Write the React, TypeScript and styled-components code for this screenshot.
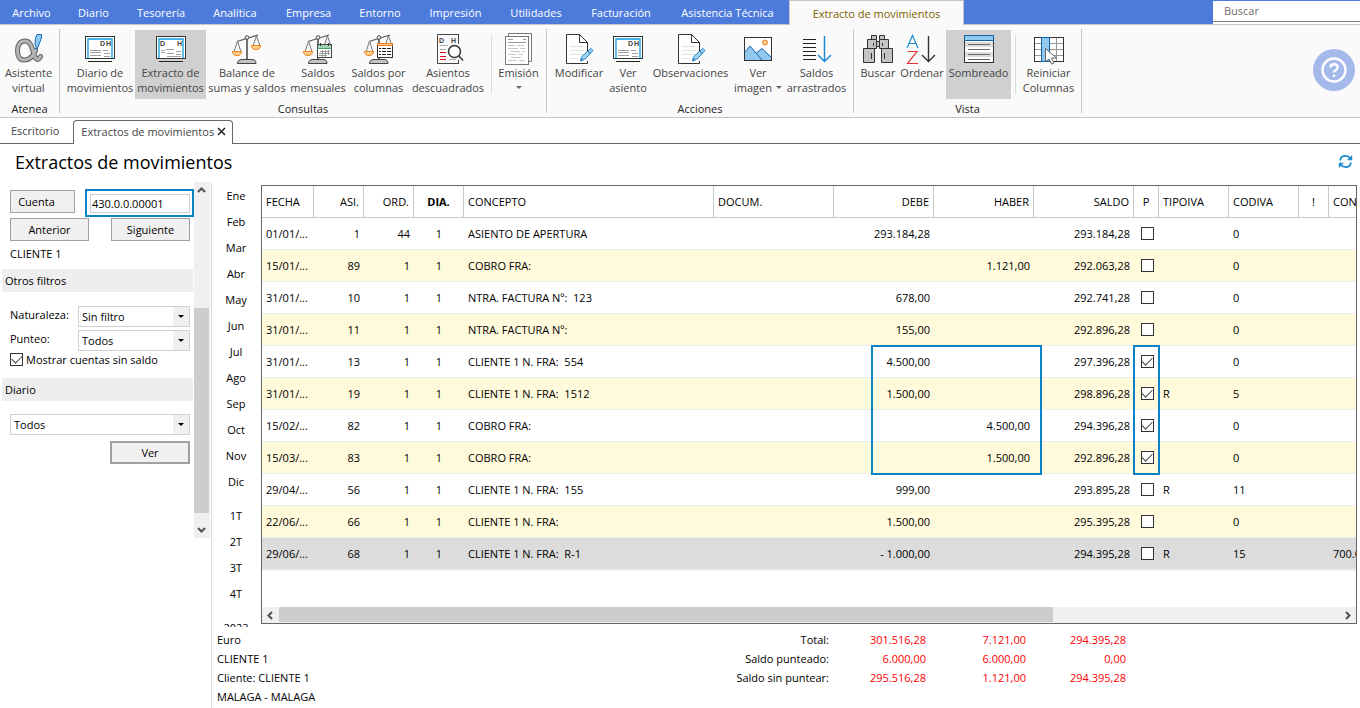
import React from "react";
import styled, { createGlobalStyle, css } from "styled-components";

const GlobalStyle = createGlobalStyle`
  * { box-sizing: border-box; }
  body {
    margin: 0;
    background: #fff;
    color: #000;
    font-family: "Open Sans", "Noto Sans", sans-serif;
    font-size: 11px;
    line-height: 15px;
  }
  button, input, select { font: inherit; color: inherit; margin: 0; }
  h1 { margin: 0; }
`;

const BLUE = "#0a84c9";

const Page = styled.div`
  min-height: 100vh;
  display: flex;
  flex-direction: column;
`;

/* ---------- Menu bar ---------- */

const MenuBar = styled.nav`
  display: flex;
  height: 24px;
  background: #4d7bdc;
`;

const MenuItem = styled.button<{ $w: number; $active?: boolean }>`
  flex: none;
  width: ${(p) => p.$w}px;
  height: 24px;
  padding: 1px 0 0;
  border: 0;
  background: transparent;
  color: #fff;
  white-space: nowrap;
  ${(p) =>
    p.$active &&
    css`
      height: 25px;
      border: 1px solid #c6c6c6;
      border-bottom: 0;
      padding-top: 0;
      background: #fafafa;
      color: #7f6000;
      position: relative;
    `}
`;

const SearchBox = styled.input`
  width: 147px;
  height: 23px;
  margin: 1px 0 0 auto;
  padding: 0 11px 5px;
  border: 0;
  background: linear-gradient(#808080, #808080) 0 20px / 100% 1px no-repeat #fff;
  outline: 0;
  &::placeholder { color: #6e6e6e; opacity: 1; }
`;

/* ---------- Ribbon ---------- */

const Ribbon = styled.div`
  display: flex;
  height: 94px;
  background: #fafafa;
  border-top: 1px solid #c6c6c6;
  border-bottom: 1px solid #c6c6c6;
`;

const RibbonGroup = styled.section`
  display: flex;
  flex-direction: column;
  margin: 4px 0;
  border-right: 1px solid #c6c6c6;
`;

const GroupTools = styled.div<{ $start: number; $end: number }>`
  display: flex;
  padding: 1px ${(p) => p.$end}px 0 ${(p) => p.$start}px;
`;

const GroupTitle = styled.div`
  margin-top: 2px;
  text-align: center;
  color: #222;
`;

const ToolButton = styled.button<{ $w: number; $active?: boolean }>`
  flex: none;
  width: ${(p) => p.$w}px;
  height: 69px;
  padding: 3px 0 0;
  border: 0;
  display: flex;
  flex-direction: column;
  align-items: center;
  color: #444;
  white-space: nowrap;
  background: ${(p) => (p.$active ? "#d0d0d0" : "transparent")};
`;

const ToolLine = styled.span`
  display: flex;
  align-items: center;
  justify-content: center;
  gap: 4px;
  height: 15px;
`;

const ToolSeparator = styled.div`
  width: 1px;
  height: 59px;
  margin: 5px 0 0 4px;
  background: #dcdcdc;
`;

const Caret = styled.span<{ $color?: string }>`
  border: 3px solid transparent;
  border-top-color: ${(p) => p.$color ?? "#666"};
  border-bottom: 0;
`;

const HelpButton = styled.button`
  width: 42px;
  height: 42px;
  margin: 24px 5px 0 auto;
  padding: 0;
  border: 0;
  border-radius: 50%;
  background: #a5baeb;
`;

/* ---------- Document tabs and title ---------- */

const TabStrip = styled.div`
  display: flex;
  align-items: flex-end;
  height: 26px;
  border-bottom: 1px solid #666;
`;

const DocTab = styled.div<{ $active?: boolean }>`
  display: flex;
  align-items: center;
  gap: 3px;
  height: 24px;
  margin-bottom: -1px;
  padding: 0 14px 3px 11px;
  color: #444;
  ${(p) =>
    p.$active &&
    css`
      padding: 0 6px 3px 7px;
      border: 1px solid #666;
      border-bottom: 0;
      border-radius: 4px 4px 0 0;
      background: #fff;
    `}
`;

const IconButton = styled.button`
  display: flex;
  padding: 0;
  border: 0;
  background: transparent;
`;

const TitleRow = styled.header`
  display: flex;
  align-items: center;
  justify-content: space-between;
  height: 38px;
  padding: 0 7px 3px 15px;
`;

const Title = styled.h1`
  font-size: 18px;
  line-height: 24px;
  font-weight: 400;
`;

/* ---------- Sidebar ---------- */

const Body = styled.main`
  flex: 1;
  display: flex;
`;

const Sidebar = styled.aside`
  flex: none;
  width: 212px;
  display: flex;
  align-items: flex-start;
  border-right: 1px solid #dcdcdc;
`;

const Filters = styled.form`
  width: 194px;
  padding-top: 7px;
  display: flex;
  flex-direction: column;
`;

const FilterRow = styled.div<{ $end?: boolean }>`
  display: flex;
  align-items: center;
  justify-content: ${(p) => (p.$end ? "flex-end" : "space-between")};
  padding: 0 4px 0 10px;
`;

const AccountRow = styled(FilterRow)`
  align-items: flex-start;
  padding-right: 0;
`;

const PushButton = styled.button<{ $w: number; $default?: boolean }>`
  width: ${(p) => p.$w}px;
  height: 23px;
  padding: 0;
  border: ${(p) => (p.$default ? 2 : 1)}px solid #a0a0a0;
  background: #f0f0f0;
`;

const CueButton = styled(PushButton)`
  margin-top: 1px;
  padding-right: 12px;
`;

const HighlightFrame = styled.div`
  display: flex;
  padding: 3px 2px 2px 3px;
  border: 2px solid ${BLUE};
`;

const AccountInput = styled.input`
  width: 100px;
  height: 19px;
  padding: 0 1px 1px;
  border: 1px solid #d0d0d0;
  outline: 0;
`;

const StepRow = styled(FilterRow)`
  margin-top: 1px;
`;

const AccountName = styled.div`
  margin: 5px 0 8px 10px;
`;

const SectionBar = styled.div`
  height: 23px;
  margin: 0 1px 0 2px;
  padding: 4px 3px;
  background: #eee;
`;

const FieldRows = styled.div`
  display: flex;
  flex-direction: column;
  gap: 3px;
  margin-top: 14px;
`;

const FieldLabel = styled.label`
  padding-bottom: 5px;
`;

const SelectShell = styled.div<{ $w: number }>`
  width: ${(p) => p.$w}px;
  height: 21px;
  display: grid;
  grid-template-columns: 1fr 16px;
  border: 1px solid #d0d0d0;
  background: linear-gradient(#f0f0f0, #f0f0f0) right / 16px 100% no-repeat #fff;
  select {
    grid-area: 1 / 1 / 2 / 3;
    appearance: none;
    border: 0;
    padding: 0 3px;
    background: transparent;
    outline: 0;
  }
  span {
    grid-area: 1 / 2;
    place-self: center;
    pointer-events: none;
  }
`;

const CheckLabel = styled.label`
  display: flex;
  align-items: center;
  gap: 3px;
  height: 15px;
  margin: 1px 0 11px 10px;
`;

const CheckBox = styled.input`
  appearance: none;
  flex: none;
  width: 13px;
  height: 13px;
  border: 1px solid #333;
  background: #fff;
  display: grid;
  place-content: center;
  td > & { margin: 0 auto; }
  &:checked::after {
    content: "";
    width: 9px;
    height: 5px;
    margin-bottom: 3px;
    border: solid #444;
    border-width: 0 0 1px 1px;
    transform: rotate(-45deg);
  }
`;

const JournalRow = styled(FilterRow)`
  margin: 13px 0 6px;
`;

const VScroll = styled.div`
  width: 16px;
  height: 356px;
  display: flex;
  flex-direction: column;
  align-items: stretch;
  background: #f0f0f0;
`;

const VEnd = styled.div`
  height: 17px;
  padding-right: 1px;
  display: flex;
  align-items: center;
  justify-content: center;
`;

const VThumb = styled.div`
  height: 205px;
  margin: auto 1px 8px 0;
  background: #cdcdcd;
`;

/* ---------- Ledger ---------- */

const Content = styled.div`
  flex: 1;
  min-width: 0;
  display: flex;
  flex-direction: column;
`;

const LedgerRow = styled.div`
  flex: 1;
  display: flex;
`;

const Periods = styled.div`
  flex: none;
  width: 49px;
  contain: size;
  overflow: hidden;
`;

const PeriodGroup = styled.div`
  margin-bottom: 8px;
`;

const Period = styled.button`
  display: block;
  width: 100%;
  height: 26px;
  padding: 0 1px 0 0;
  border: 0;
  background: transparent;
`;

const Frame = styled.div`
  position: relative;
  flex: 1;
  min-width: 0;
  margin: 3px 3px 3px 0;
  display: flex;
  flex-direction: column;
  overflow: hidden;
  border: 1px solid #666;
`;

const Table = styled.table`
  width: 1177px;
  table-layout: fixed;
  border-collapse: separate;
  border-spacing: 0;
`;

type Align = "left" | "center" | "right";

const Th = styled.th<{ $align: Align; $strong?: boolean }>`
  height: 32px;
  padding: 0 4px 1px;
  border-right: 1px solid #c8c8c8;
  border-bottom: 1px solid #c8c8c8;
  font-weight: ${(p) => (p.$strong ? 700 : 400)};
  text-align: ${(p) => p.$align};
  white-space: nowrap;
`;

const Td = styled.td<{ $align: Align; $tick?: boolean }>`
  height: 32px;
  padding: ${(p) => (p.$tick ? "0 3px 0 4px" : "0 4px 1px")};
  border-bottom: 1px solid #eee;
  text-align: ${(p) => p.$align};
  white-space: pre;
`;

const Tr = styled.tr<{ $tone: "plain" | "shade" | "current" }>`
  background: ${(p) =>
    p.$tone === "current" ? "#dcdcdc" : p.$tone === "shade" ? "#fffadc" : "#fff"};
  ${(p) =>
    p.$tone === "current" &&
    css`
      td {
        height: 33px;
        border-bottom-width: 2px;
      }
    `}
`;

const Marker = styled.div<{ $left: number; $w: number }>`
  position: absolute;
  top: 159px;
  left: ${(p) => p.$left}px;
  width: ${(p) => p.$w}px;
  height: 130px;
  border: 2px solid ${BLUE};
  pointer-events: none;
`;

const HScroll = styled.div`
  display: flex;
  height: 16px;
  margin-top: auto;
  background: #f0f0f0;
  svg { margin: auto; }
`;

const HEnd = styled.div`
  width: 17px;
  display: flex;
`;

const HTrack = styled.div`
  flex: 1;
`;

const HThumb = styled.div`
  width: 73%;
  height: 15px;
  background: #cdcdcd;
`;

const Footer = styled.footer`
  display: flex;
  padding: 3px 0 2px 5px;
`;

const FootInfo = styled.div`
  flex: none;
  width: 400px;
  line-height: 19px;
`;

const Totals = styled.table`
  border-collapse: collapse;
  height: 57px;
  th, td {
    padding: 0;
    height: 19px;
    text-align: right;
    font-weight: 400;
    white-space: nowrap;
  }
  th { width: 212px; }
  td { width: 100px; color: #f00; }
  td:nth-child(2) { width: 97px; }
`;

/* ---------- Icons ---------- */

const Svg = ({ children }: { children: React.ReactNode }) => (
  <svg width="32" height="32" viewBox="0 0 32 32" fill="none" aria-hidden="true">
    {children}
  </svg>
);

const AlphaIcon = () => {
  const d = "M22.500 17.500C20 24 16 27 11 27C6.500 27 4.500 23 4.500 17.500C4.500 12 7 8 12 8C17 8 18.500 13 20.500 19.500C22 26 24.500 29 27.500 23.500";
  return (
    <Svg>
      <path d={d} stroke="#606060" strokeWidth="5" strokeLinecap="round" />
      <path d={d} stroke="#b4b4b4" strokeWidth="3" strokeLinecap="round" />
      <path d="M24 1.500L28.500 1.500L28.500 5L24 16.500L22 11.500L22.500 5z" fill="#90c8f0" stroke="#1a6fb8" />
    </Svg>
  );
};

const Screen = ({ wide }: { wide?: boolean }) => (
  <Svg>
    <rect x="1.500" y="3.500" width="29" height="22" fill="#fff" stroke="#333" />
    <path d="M4 25V6H28V25" stroke="#109bd8" strokeWidth="1.300" />
    <g fill="#444" fontSize="7" fontWeight="700" fontFamily="Liberation Sans, sans-serif">
      <text x={wide ? 5 : 16} y="13">D</text>
      <text x="22" y="13">H</text>
    </g>
    <path
      d={
        wide
          ? "M6 17.500H10M11 16.500H19M6 19.500H10M12 20.500H19M21 18.500H26M21 21.500H26M12 23.500H26"
          : "M6 17.500H17M19 17.500H24M6 19.500H17M20 20.500H26M6 22.500H17M20 23.500H26"
      }
      stroke="#a0a0a0"
    />
    <path d="M4 28.500H28" stroke="#222" />
  </Svg>
);

const ScaleParts = () => (
  <>
    <path d="M16 5V27" stroke="#444" strokeWidth="1.500" />
    <path d="M6 8.500L27 2" stroke="#555" strokeWidth="1.300" />
    <path d="M6.500 8L3 19M6.500 8L10 19M25.500 3L22 13M25.500 3L29 13" stroke="#777" />
    <circle cx="16" cy="4.500" r="1.800" fill="#fafafa" stroke="#444" />
    <path d="M1.500 18.500H10.500C10.500 21 9 22.500 6 22.500S1.500 21 1.500 18.500zM20.500 12.500H29.500C29.500 15 28 16.500 25 16.500S20.500 15 20.500 12.500z" fill="#ffd08a" stroke="#f08020" />
    <path d="M6.500 30.500C6.500 28 8 26.500 11 26.500H21C24 26.500 25 28 25 30.500z" fill="#c4c4c4" stroke="#444" />
  </>
);

const ScaleIcon = () => (
  <Svg><ScaleParts /></Svg>
);

const ScaleMonthIcon = () => (
  <Svg>
    <ScaleParts />
    <rect x="15.500" y="11.500" width="14" height="13" fill="#fff" stroke="#444" />
    <path d="M16 12H29V15H16z" fill="#9ed6b0" />
    <path d="M15 15.500H30" stroke="#4f9f6c" />
    <path d="M18.500 10V13M26.500 10V13" stroke="#333" />
    <path d="M18 18.500H28M17 20.500H28M17 22.500H25M20.500 17V24M23.500 17V24M26.500 17V22" stroke="#888" strokeWidth=".8" />
  </Svg>
);

const ScaleColumnsIcon = () => (
  <Svg>
    <ScaleParts />
    <rect x="14.500" y="10.500" width="15" height="14" fill="#fff" stroke="#333" />
    <path d="M14.500 10.500H29.500V12.500H14.500z" fill="#ffd08a" stroke="#e87722" />
    <path d="M16 15.500H18M19 15.500H23M24 15.500H28M16 18.500H18M19 18.500H23M24 18.500H28M16 21.500H18M19 21.500H23M24 21.500H28" stroke="#222" />
  </Svg>
);

const UnbalancedIcon = () => (
  <Svg>
    <path d="M26.500 1.500H5.500V30.500H26.500M26.500 1V11M26.500 27V31" stroke="#444" />
    <g fill="#444" fontSize="7" fontWeight="700" fontFamily="Liberation Sans, sans-serif">
      <text x="7" y="10">D</text>
      <text x="19" y="10">H</text>
    </g>
    <path d="M8 12.500H16M8 16.500H14M17 26.500H24" stroke="#a8a8a8" />
    <path d="M8 19.500H14M8 23.500H14M8 26.500H14" stroke="#e00020" strokeWidth="1.200" />
    <circle cx="22.500" cy="18.500" r="6" fill="#fff" stroke="#333" strokeWidth="1.500" />
    <path d="M27 23L31 27.500" stroke="#333" strokeWidth="1.500" />
  </Svg>
);

const PrintIcon = () => (
  <Svg>
    <path d="M5.500 3V.5H28.500V28.500H26" stroke="#777" />
    <rect x="2.500" y="3.500" width="23" height="28" fill="#fff" stroke="#777" />
    <path d="M5 6.500H10M20 6.500H23M5 9.500H23" stroke="#999" />
    <path d="M5 12.500H12M14 12.500H21M5 15.500H15M17 15.500H22M8 18.500H17M19 18.500H22M5 21.500H13M15 21.500H20M8 24.500H18M5 27.500H14M16 27.500H22" stroke="#c8c8c8" />
  </Svg>
);

const EditIcon = () => (
  <Svg>
    <path d="M24.500 21V9.500L16.500 1.500H3.500V30.500H24.500V28" fill="#fff" stroke="#333" />
    <path d="M16.500 1.500V9.500H24.500" stroke="#333" />
    <path d="M7 13.500H21M7 17.500H21M7 21.500H20M7 25.500H15" stroke="#e2e2e2" />
    <path d="M17.500 28L18.500 24L27.500 15.500L30 17.500L21.500 26.500z" fill="#a4d3f2" stroke="#1c7cc0" />
    <path d="M25 18L27.500 20.500M17.500 28L19.500 25.500" stroke="#1c7cc0" />
  </Svg>
);

const ImageIcon = () => (
  <Svg>
    <rect x="2.500" y="4.500" width="27" height="23" fill="#fff" stroke="#333" />
    <path d="M3 19L8 13L14.500 19.500L20 15.500L29 24V27H3z" fill="#92c8ee" />
    <path d="M3 19L8 13L20 27M14.500 20L20 15.500L29 24" stroke="#1664a8" />
    <circle cx="23" cy="9.500" r="2.500" fill="#ffd08a" stroke="#e87722" />
  </Svg>
);

const CarryIcon = () => (
  <Svg>
    <path d="M2 6.500H15M2 10.500H15M2 14.500H15M2 18.500H15M2 22.500H15M2 26.500H15" stroke="#222" />
    <path d="M23.500 3V28M17 22L23.500 28.500L30 22" stroke="#1c8ad0" strokeWidth="1.500" />
  </Svg>
);

const BinocularsIcon = () => (
  <Svg>
    <g fill="#c4c4c4" stroke="#333">
      <path d="M9.500 2.500H14.500V6.500H9.500zM17.500 2.500H22.500V6.500H17.500zM5.500 6.500H14.500V15.500H5.500zM17.500 6.500H26.500V15.500H17.500zM1.500 15.500H12.500V29.500H1.500zM19.500 15.500H30.500V29.500H19.500z" />
      <path d="M14.500 8.500H17.500V13.500H14.500zM9.500 20V26M22.500 20V26M11.500 10V13M20.500 10V13" />
    </g>
  </Svg>
);

const SortIcon = () => (
  <Svg>
    <path d="M1 15L6.500 2.500L12 15M3 10.500H10" stroke="#1c8ad0" strokeWidth="1.200" />
    <path d="M1.500 18.500H11L1.500 30.500H12" stroke="#e63232" strokeWidth="1.200" />
    <path d="M22.500 3V28M16 22L22.500 28.500L29 22" stroke="#333" strokeWidth="1.400" />
  </Svg>
);

const ShadeIcon = () => (
  <Svg>
    <rect x="1.500" y="2.500" width="29" height="27" fill="#fff" stroke="#333" />
    <path d="M2 9H30V14H2zM2 19H30V24H2z" fill="#ddd" />
    <rect x="1.500" y="2.500" width="29" height="5" fill="#90c8f0" stroke="#1664a8" />
    <path d="M5 11.500H27M5 16.500H27M5 21.500H27M5 26.500H27" stroke="#666" />
  </Svg>
);

const ResetColumnsIcon = () => (
  <Svg>
    <rect x="1.500" y="4.500" width="29" height="24" fill="#fff" stroke="#333" />
    <path d="M2 10.500H30M2 16.500H30M2 22.500H30M23.500 5V28" stroke="#999" />
    <rect x="8.500" y="4.500" width="8" height="24" fill="#92c8ee" stroke="#1664a8" />
    <path d="M12.500 15.500V28.500L16 26L18.500 31L21 30L18.500 25H23.500z" fill="#fff" stroke="#666" />
  </Svg>
);

const Arrow = ({ d }: { d: string }) => (
  <svg width="9" height="9" viewBox="0 0 9 9" fill="none" aria-hidden="true">
    <path d={d} stroke="#505050" strokeWidth="2" />
  </svg>
);

/* ---------- Data ---------- */

const menus: [string, number][] = [
  ["Archivo", 63], ["Diario", 61], ["Tesorería", 74], ["Analítica", 74], ["Empresa", 73],
  ["Entorno", 70], ["Impresión", 81], ["Utilidades", 80], ["Facturación", 90], ["Asistencia Técnica", 123],
];

interface Tool {
  icon: React.ReactNode;
  lines: string[];
  w: number;
  active?: boolean;
  caret?: boolean;
  split?: boolean;
}

const groups: { title: string; start: number; end: number; tools: Tool[] }[] = [
  {
    title: "Atenea",
    start: 0,
    end: 2,
    tools: [{ icon: <AlphaIcon />, lines: ["Asistente", "virtual"], w: 57 }],
  },
  {
    title: "Consultas",
    start: 5,
    end: 1,
    tools: [
      { icon: <Screen />, lines: ["Diario de", "movimientos"], w: 70 },
      { icon: <Screen wide />, lines: ["Extracto de", "movimientos"], w: 71, active: true },
      { icon: <ScaleIcon />, lines: ["Balance de", "sumas y saldos"], w: 82 },
      { icon: <ScaleMonthIcon />, lines: ["Saldos", "mensuales"], w: 60 },
      { icon: <ScaleColumnsIcon />, lines: ["Saldos por", "columnas"], w: 61 },
      { icon: <UnbalancedIcon />, lines: ["Asientos", "descuadrados"], w: 78 },
      { icon: <PrintIcon />, lines: ["Emisión", ""], w: 53, caret: true, split: true },
    ],
  },
  {
    title: "Acciones",
    start: 4,
    end: 4,
    tools: [
      { icon: <EditIcon />, lines: ["Modificar"], w: 56 },
      { icon: <Screen />, lines: ["Ver", "asiento"], w: 42 },
      { icon: <EditIcon />, lines: ["Observaciones"], w: 83 },
      { icon: <ImageIcon />, lines: ["Ver", "imagen"], w: 52, caret: true },
      { icon: <CarryIcon />, lines: ["Saldos", "arrastrados"], w: 65 },
    ],
  },
  {
    title: "Vista",
    start: 4,
    end: 0,
    tools: [
      { icon: <BinocularsIcon />, lines: ["Buscar"], w: 40 },
      { icon: <SortIcon />, lines: ["Ordenar"], w: 48 },
      { icon: <ShadeIcon />, lines: ["Sombreado"], w: 65, active: true },
      { icon: <ResetColumnsIcon />, lines: ["Reiniciar", "Columnas"], w: 65, split: true },
    ],
  },
];

const columns: { name: string; w: number; align: Align; strong?: boolean }[] = [
  { name: "FECHA", w: 52, align: "left" },
  { name: "ASI.", w: 50, align: "right" },
  { name: "ORD.", w: 50, align: "right" },
  { name: "DIA.", w: 50, align: "center", strong: true },
  { name: "CONCEPTO", w: 250, align: "left" },
  { name: "DOCUM.", w: 120, align: "left" },
  { name: "DEBE", w: 100, align: "right" },
  { name: "HABER", w: 100, align: "right" },
  { name: "SALDO", w: 100, align: "right" },
  { name: "P", w: 25, align: "center" },
  { name: "TIPOIVA", w: 70, align: "left" },
  { name: "CODIVA", w: 70, align: "left" },
  { name: "!", w: 30, align: "center" },
  { name: "CONTRAPARTIDA", w: 110, align: "left" },
];

type Cell = string | boolean;

const rows: Cell[][] = [
  ["01/01/...", "1", "44", "1", "ASIENTO DE APERTURA", "", "293.184,28", "", "293.184,28", false, "", "0", "", ""],
  ["15/01/...", "89", "1", "1", "COBRO FRA:", "", "", "1.121,00", "292.063,28", false, "", "0", "", ""],
  ["31/01/...", "10", "1", "1", "NTRA. FACTURA Nº:  123", "", "678,00", "", "292.741,28", false, "", "0", "", ""],
  ["31/01/...", "11", "1", "1", "NTRA. FACTURA Nº:", "", "155,00", "", "292.896,28", false, "", "0", "", ""],
  ["31/01/...", "13", "1", "1", "CLIENTE 1 N. FRA:  554", "", "4.500,00", "", "297.396,28", true, "", "0", "", ""],
  ["31/01/...", "19", "1", "1", "CLIENTE 1 N. FRA:  1512", "", "1.500,00", "", "298.896,28", true, "R", "5", "", ""],
  ["15/02/...", "82", "1", "1", "COBRO FRA:", "", "", "4.500,00", "294.396,28", true, "", "0", "", ""],
  ["15/03/...", "83", "1", "1", "COBRO FRA:", "", "", "1.500,00", "292.896,28", true, "", "0", "", ""],
  ["29/04/...", "56", "1", "1", "CLIENTE 1 N. FRA:  155", "", "999,00", "", "293.895,28", false, "R", "11", "", ""],
  ["22/06/...", "66", "1", "1", "CLIENTE 1 N. FRA:", "", "1.500,00", "", "295.395,28", false, "", "0", "", ""],
  ["29/06/...", "68", "1", "1", "CLIENTE 1 N. FRA:  R-1", "", "- 1.000,00", "", "294.395,28", false, "R", "15", "", "700.0.0.00000"],
];

const periods = [
  ["Ene", "Feb", "Mar", "Abr", "May", "Jun", "Jul", "Ago", "Sep", "Oct", "Nov", "Dic"],
  ["1T", "2T", "3T", "4T"],
  ["2023"],
];

const totals = [
  ["Total:", "301.516,28", "7.121,00", "294.395,28"],
  ["Saldo punteado:", "6.000,00", "6.000,00", "0,00"],
  ["Saldo sin puntear:", "295.516,28", "1.121,00", "294.395,28"],
];

const DropDown = ({ id, w, value, label }: { id: string; w: number; value: string; label?: string }) => (
  <SelectShell $w={w}>
    <select id={id} defaultValue={value} aria-label={label}>
      <option>{value}</option>
    </select>
    <Caret $color="#000" />
  </SelectShell>
);

export default function App() {
  return (
    <Page>
      <GlobalStyle />
      <MenuBar>
        {menus.map(([name, w]) => (
          <MenuItem key={name} $w={w}>{name}</MenuItem>
        ))}
        <MenuItem $w={175} $active>Extracto de movimientos</MenuItem>
        <SearchBox placeholder="Buscar" aria-label="Buscar" />
      </MenuBar>

      <Ribbon>
        {groups.map((g) => (
          <RibbonGroup key={g.title}>
            <GroupTools $start={g.start} $end={g.end}>
              {g.tools.map((t) => (
                <React.Fragment key={t.lines.join()}>
                  {t.split && <ToolSeparator />}
                  <ToolButton $w={t.w} $active={t.active}>
                    {t.icon}
                    {t.lines.map((line, i) => (
                      <ToolLine key={i}>
                        {line}
                        {t.caret && i === 1 && <Caret />}
                      </ToolLine>
                    ))}
                  </ToolButton>
                </React.Fragment>
              ))}
            </GroupTools>
            <GroupTitle>{g.title}</GroupTitle>
          </RibbonGroup>
        ))}
        <HelpButton aria-label="Ayuda">
          <svg width="42" height="42" viewBox="0 0 42 42" fill="none" stroke="#fff" aria-hidden="true">
            <circle cx="21" cy="21" r="11.500" strokeWidth="2.400" />
            <path d="M17.500 18.500C17.500 16.500 19 15.300 21 15.300S24.700 16.500 24.700 18.500C24.700 21 21 21 21 23.500" strokeWidth="2.400" />
            <circle cx="21" cy="26.800" r="1.400" fill="#fff" stroke="none" />
          </svg>
        </HelpButton>
      </Ribbon>

      <TabStrip>
        <DocTab>Escritorio</DocTab>
        <DocTab $active>
          Extractos de movimientos
          <IconButton aria-label="Cerrar">
            <svg width="9" height="9" viewBox="0 0 9 9" aria-hidden="true">
              <path d="M1 1L8 8M8 1L1 8" stroke="#222" strokeWidth="1.500" />
            </svg>
          </IconButton>
        </DocTab>
      </TabStrip>

      <TitleRow>
        <Title>Extractos de movimientos</Title>
        <IconButton aria-label="Actualizar">
          <svg width="15" height="15" viewBox="0 0 15 15" fill="none" stroke="#1c8ad0" aria-hidden="true">
            <path d="M2 6.500C2.500 3.500 4.800 1.800 7.500 1.800C9.500 1.800 11 2.600 12.300 4.200M13 8.500C12.500 11.500 10.200 13.200 7.500 13.200C5.500 13.200 4 12.400 2.700 10.800" strokeWidth="1.700" />
            <path d="M14.200 1V6.200H9zM.8 14V8.800H6z" fill="#1c8ad0" stroke="none" />
          </svg>
        </IconButton>
      </TitleRow>

      <Body>
        <Sidebar>
          <Filters>
            <AccountRow>
              <CueButton type="button" $w={65}>Cuenta</CueButton>
              <HighlightFrame>
                <AccountInput defaultValue="430.0.0.00001" aria-label="Cuenta" />
              </HighlightFrame>
            </AccountRow>
            <StepRow>
              <PushButton type="button" $w={79}>Anterior</PushButton>
              <PushButton type="button" $w={79}>Siguiente</PushButton>
            </StepRow>
            <AccountName>CLIENTE 1</AccountName>
            <SectionBar>Otros filtros</SectionBar>
            <FieldRows>
              <FilterRow>
                <FieldLabel htmlFor="naturaleza">Naturaleza:</FieldLabel>
                <DropDown id="naturaleza" w={112} value="Sin filtro" />
              </FilterRow>
              <FilterRow>
                <FieldLabel htmlFor="punteo">Punteo:</FieldLabel>
                <DropDown id="punteo" w={112} value="Todos" />
              </FilterRow>
            </FieldRows>
            <CheckLabel>
              <CheckBox type="checkbox" defaultChecked />
              Mostrar cuentas sin saldo
            </CheckLabel>
            <SectionBar>Diario</SectionBar>
            <JournalRow>
              <DropDown id="diario" w={180} value="Todos" label="Diario" />
            </JournalRow>
            <FilterRow $end>
              <PushButton type="button" $w={80} $default>Ver</PushButton>
            </FilterRow>
          </Filters>
          <VScroll>
            <VEnd><Arrow d="M1 6L4.500 2.500L8 6" /></VEnd>
            <VThumb />
            <VEnd><Arrow d="M1 3L4.500 6.500L8 3" /></VEnd>
          </VScroll>
        </Sidebar>

        <Content>
          <LedgerRow>
            <Periods>
              {periods.map((group) => (
                <PeriodGroup key={group[0]}>
                  {group.map((p) => (
                    <Period key={p}>{p}</Period>
                  ))}
                </PeriodGroup>
              ))}
            </Periods>
            <Frame>
              <Table>
                <colgroup>
                  {columns.map((c) => (
                    <col key={c.name} width={c.w} />
                  ))}
                </colgroup>
                <thead>
                  <tr>
                    {columns.map((c) => (
                      <Th key={c.name} $align={c.align} $strong={c.strong}>{c.name}</Th>
                    ))}
                  </tr>
                </thead>
                <tbody>
                  {rows.map((r, i) => (
                    <Tr key={i} $tone={i === rows.length - 1 ? "current" : i % 2 ? "shade" : "plain"}>
                      {r.map((c, j) => (
                        <Td key={j} $align={columns[j].align} $tick={typeof c === "boolean"}>
                          {typeof c === "boolean" ? (
                            <CheckBox type="checkbox" defaultChecked={c} aria-label={`Punteado, asiento ${r[1]}`} />
                          ) : (
                            c
                          )}
                        </Td>
                      ))}
                    </Tr>
                  ))}
                </tbody>
              </Table>
              <Marker $left={609} $w={171} />
              <Marker $left={871} $w={27} />
              <HScroll>
                <HEnd><Arrow d="M6 1L2.500 4.500L6 8" /></HEnd>
                <HTrack><HThumb /></HTrack>
                <HEnd><Arrow d="M3 1L6.500 4.500L3 8" /></HEnd>
              </HScroll>
            </Frame>
          </LedgerRow>
          <Footer>
            <FootInfo>
              <div>Euro</div>
              <div>CLIENTE 1</div>
              <div>Cliente: CLIENTE 1</div>
              <div>MALAGA - MALAGA</div>
            </FootInfo>
            <Totals>
              <tbody>
                {totals.map(([label, ...values]) => (
                  <tr key={label}>
                    <th scope="row">{label}</th>
                    {values.map((v, i) => (
                      <td key={i}>{v}</td>
                    ))}
                  </tr>
                ))}
              </tbody>
            </Totals>
          </Footer>
        </Content>
      </Body>
    </Page>
  );
}
